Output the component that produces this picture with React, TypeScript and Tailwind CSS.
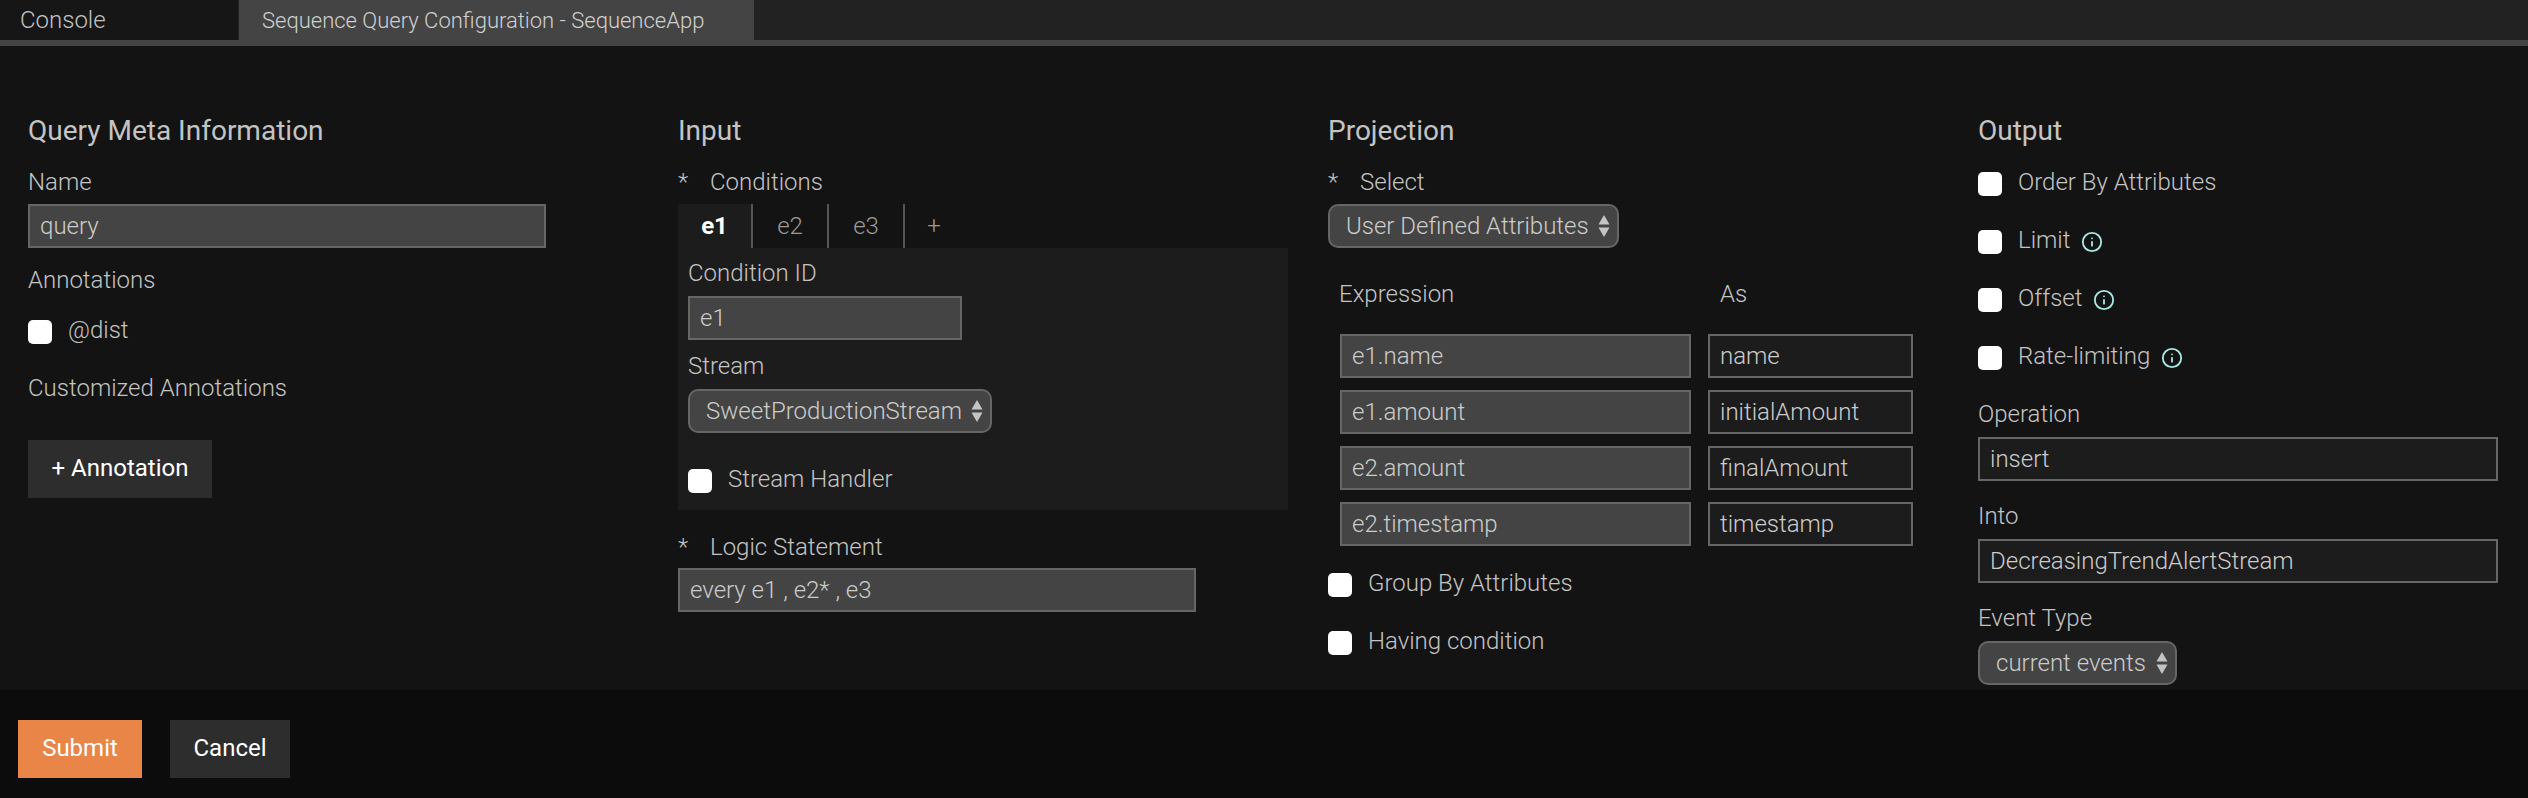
import { Info } from "lucide-react";

function Label({ text, star, className = "" }: { text: string; star?: boolean; className?: string }) {
    return (
        <div className={`flex h-[34px] items-center text-[24px] font-light text-[#c4c4c4] ${className}`}>
            {star && <span className="w-[32px]">*</span>}
            {text}
        </div>
    );
}

function TextInput({ value, className = "" }: { value: string; className?: string }) {
    return (
        <input
            readOnly
            value={value}
            className={`block h-[44px] border-2 border-[#666666] px-[10px] text-[24px] font-light text-[#cccccc] outline-none ${className}`}
        />
    );
}

function Check({ label, info, className = "" }: { label: string; info?: boolean; className?: string }) {
    return (
        <label className={`flex h-[24px] items-center text-[24px] font-light text-[#c4c4c4] ${className}`}>
            <input type="checkbox" className="mr-[16px] h-[24px] w-[24px] appearance-none rounded-[5px] bg-white" />
            <span className="-mt-[5px]">{label}</span>
            {info && <Info size={22} strokeWidth={2} className="ml-[11px] text-[#a9e8e4]" />}
        </label>
    );
}

function Dropdown({ value, className = "" }: { value: string; className?: string }) {
    return (
        <div className={`flex h-[44px] items-center justify-between rounded-[10px] border-2 border-[#666666] bg-[#444444] pl-[16px] pr-[7px] text-[24px] font-light text-[#cccccc] ${className}`}>
            {value}
            <svg width="12" height="22" viewBox="0 0 12 22" fill="#c4c4c4">
                <path d="M6 0l5.5 9.5H.5z" />
                <path d="M6 22L.5 12.5h11z" />
            </svg>
        </div>
    );
}

const rows = [
    ["e1.name", "name"],
    ["e1.amount", "initialAmount"],
    ["e2.amount", "finalAmount"],
    ["e2.timestamp", "timestamp"],
];

export default function App() {
    return (
        <div className="flex h-[798px] w-[2528px] flex-col overflow-hidden bg-[#131313] font-['Roboto',sans-serif]">
            <div className="flex h-[46px] border-b-[6px] border-[#444444] bg-[#222222]">
                <div className="flex h-[40px] w-[238px] items-center bg-[#161616] pl-[20px] text-[24px] font-light text-[#c4c4c4]">
                    Console
                </div>
                <div className="ml-[1px] flex h-[40px] w-[515px] items-center bg-[#444444] pl-[23px] text-[22px] font-light text-[#d0d0d0]">
                    Sequence Query Configuration - SequenceApp
                </div>
            </div>

            <div className="grid h-[644px] grid-cols-[650px_650px_650px_520px] overflow-hidden pl-[28px] pt-[66px]">
                <div>
                    <h2 className="h-[36px] pt-[1px] text-[28px] leading-[36px] text-[#c4c4c4]">Query Meta Information</h2>
                    <Label text="Name" className="mt-[17px] mb-[5px]" />
                    <TextInput value="query" className="w-[518px] bg-[#444444]" />
                    <Label text="Annotations" className="mt-[15px]" />
                    <Check label="@dist" className="mt-[23px]" />
                    <Label text="Customized Annotations" className="mt-[27px]" />
                    <button className="mt-[35px] h-[58px] w-[184px] bg-[#2d2d2d] pb-[2px] text-[24px] text-white">+ Annotation</button>
                </div>

                <div>
                    <h2 className="h-[36px] pt-[1px] text-[28px] leading-[36px] text-[#c4c4c4]">Input</h2>
                    <Label text="Conditions" star className="mt-[17px] mb-[5px]" />
                    <div className="flex h-[44px] w-[610px] text-[24px] font-light text-[#9a9a9a]">
                        <div className="flex w-[75px] items-center justify-center border-r-2 border-[#555555] bg-[#1c1c1c] font-bold text-white">e1</div>
                        <div className="flex w-[76px] items-center justify-center border-r-2 border-[#555555]">e2</div>
                        <div className="flex w-[76px] items-center justify-center border-r-2 border-[#555555]">e3</div>
                        <div className="flex w-[58px] items-center justify-center">+</div>
                    </div>
                    <div className="h-[262px] w-[610px] bg-[#1c1c1c] px-[10px] pt-[8px]">
                        <Label text="Condition ID" className="mb-[6px]" />
                        <TextInput value="e1" className="w-[274px] bg-[#444444]" />
                        <Label text="Stream" className="mt-[9px] mb-[6px]" />
                        <Dropdown value="SweetProductionStream" className="w-[304px]" />
                        <Check label="Stream Handler" className="mt-[36px]" />
                    </div>
                    <Label text="Logic Statement" star className="mt-[20px] mb-[4px]" />
                    <TextInput value="every e1 , e2* , e3" className="w-[518px] bg-[#444444]" />
                </div>

                <div>
                    <h2 className="h-[36px] pt-[1px] text-[28px] leading-[36px] text-[#c4c4c4]">Projection</h2>
                    <Label text="Select" star className="mt-[17px] mb-[5px]" />
                    <Dropdown value="User Defined Attributes" className="w-[291px]" />
                    <div className="mt-[29px] flex pl-[11px]">
                        <Label text="Expression" className="w-[381px]" />
                        <Label text="As" />
                    </div>
                    <div className="mt-[23px] flex flex-col gap-[12px] pl-[12px]">
                        {rows.map(([expression, name]) => (
                            <div key={expression} className="flex gap-[17px]">
                                <TextInput value={expression} className="w-[351px] bg-[#444444]" />
                                <TextInput value={name} className="w-[205px] bg-[#1c1c1c]" />
                            </div>
                        ))}
                    </div>
                    <Check label="Group By Attributes" className="mt-[27px]" />
                    <Check label="Having condition" className="mt-[34px]" />
                </div>

                <div>
                    <h2 className="h-[36px] pt-[1px] text-[28px] leading-[36px] text-[#c4c4c4]">Output</h2>
                    <div className="mt-[24px] flex flex-col gap-[34px]">
                        <Check label="Order By Attributes" />
                        <Check label="Limit" info />
                        <Check label="Offset" info />
                        <Check label="Rate-limiting" info />
                    </div>
                    <Label text="Operation" className="mt-[27px] mb-[6px]" />
                    <TextInput value="insert" className="w-[520px] bg-[#1c1c1c]" />
                    <Label text="Into" className="mt-[18px] mb-[6px]" />
                    <TextInput value="DecreasingTrendAlertStream" className="w-[520px] bg-[#1c1c1c]" />
                    <Label text="Event Type" className="mt-[18px] mb-[6px]" />
                    <Dropdown value="current events" className="w-[199px]" />
                </div>
            </div>

            <div className="flex h-[108px] gap-[28px] bg-[#0c0c0c] pl-[18px] pt-[30px]">
                <button className="h-[58px] w-[124px] bg-[#e88547] pb-[2px] text-[24px] text-white">Submit</button>
                <button className="h-[58px] w-[120px] bg-[#2d2d2d] pb-[2px] text-[24px] text-white">Cancel</button>
            </div>
        </div>
    );
}
